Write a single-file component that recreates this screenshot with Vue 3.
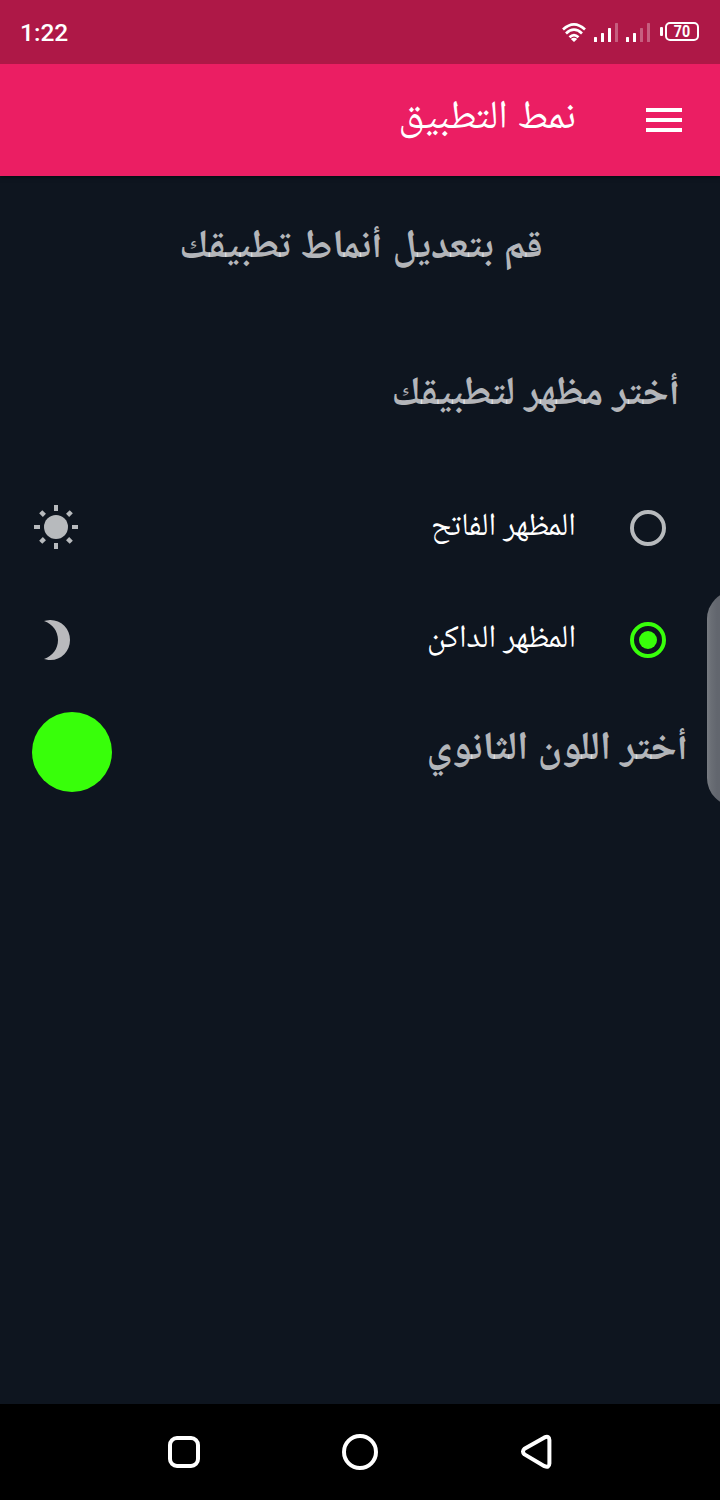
<script setup>
import { ref } from 'vue'

const theme = ref('dark')
const themes = [
  { id: 'light', label: 'المظهر الفاتح' },
  { id: 'dark', label: 'المظهر الداكن' }
]
</script>

<template>
  <div class="screen" dir="rtl">
    <header class="status" dir="ltr">
      <span class="clock">1:22</span>
      <svg class="status-icons" viewBox="0 0 142 24" width="142" height="24">
        <g fill="none" stroke="#fff" stroke-width="2.7">
          <path d="M3 9.4Q14-.8 25 9.4" />
          <path d="M6 13.4Q14 5.9 22 13.4" />
          <path d="M9.5 17.2Q14 13 18.5 17.2" />
        </g>
        <path d="M10.8 19Q14 16.4 17.2 19L14 22Z" fill="#fff" />
        <g fill="#fff">
          <rect x="34" y="17" width="3" height="5" rx=".6" />
          <rect x="41" y="13" width="3" height="9" rx=".6" />
          <rect x="48" y="8" width="3" height="14" rx=".6" />
          <rect x="66" y="17" width="3" height="5" rx=".6" />
          <rect x="73" y="13" width="3" height="9" rx=".6" />
          <rect x="100" y="7" width="3" height="9" rx="1" />
        </g>
        <g fill="#fff" opacity=".3">
          <rect x="55" y="3" width="3" height="19" rx=".6" />
          <rect x="80" y="8" width="3" height="14" rx=".6" />
          <rect x="87" y="3" width="3" height="19" rx=".6" />
        </g>
        <rect x="106" y="3" width="32" height="17" rx="4" fill="none" stroke="#fff" stroke-width="2" />
        <text x="122" y="17.3" text-anchor="middle" textLength="16.4" lengthAdjust="spacingAndGlyphs" class="battery">70</text>
      </svg>
    </header>

    <div class="appbar">
      <svg class="menu" width="36" height="24" viewBox="0 0 36 24">
        <path d="M0 0H36V4H0ZM0 10H36V14H0ZM0 20H36V24H0Z" fill="#fff" />
      </svg>
      <h1 class="title">نمط التطبيق</h1>
    </div>

    <main class="content">
      <h2 class="heading intro">قم بتعديل أنماط تطبيقك</h2>
      <h2 class="heading pick">أختر مظهر لتطبيقك</h2>

      <div v-for="t in themes" :key="t.id" class="option" @click="theme = t.id">
        <svg class="radio" :class="{ on: theme === t.id }" width="36" height="36" viewBox="0 0 36 36">
          <circle cx="18" cy="18" r="16" fill="none" stroke="currentColor" stroke-width="4" />
          <circle v-if="theme === t.id" cx="18" cy="18" r="9" fill="currentColor" />
        </svg>
        <span class="label">{{ t.label }}</span>
        <svg v-if="t.id === 'light'" class="glyph" width="48" height="48" viewBox="0 1 48 48">
          <g fill="#b7babd">
            <circle cx="24" cy="24" r="12" />
            <path d="M22 2h4v6h-4zM22 40h4v6h-4zM2 22h6v4H2zM40 22h6v4h-6z" />
            <path d="M21.8 2.4h4.4v5.2h-4.4zM21.8 40.4h4.4v5.2h-4.4zM2.4 21.8h5.2v4.4H2.4zM40.4 21.8h5.2v4.4h-5.2z" transform="rotate(45 24 24)" />
          </g>
        </svg>
        <svg v-else class="glyph" width="48" height="48" viewBox="0 0 48 48">
          <path d="M12 5C15.5 4 18 4 18.5 4A19.5 20 0 0 1 18.5 44C18 44 15.5 44 12 43C20.5 40 26 33 26 24S20.5 8 12 5Z" fill="#b9babd" />
        </svg>
      </div>

      <div class="accent">
        <h2 class="heading accent-title">أختر اللون الثانوي</h2>
        <i class="swatch"></i>
      </div>
      <i class="edge"></i>
    </main>

    <nav class="navbar" dir="ltr">
      <svg width="36" height="36" viewBox="0 0 36 36">
        <rect x="4" y="4" width="28" height="28" rx="7" />
      </svg>
      <svg width="36" height="36" viewBox="0 0 36 36">
        <circle cx="18" cy="18" r="16" />
      </svg>
      <svg width="36" height="36" viewBox="0 0 36 36">
        <path d="M26.5 3.4L6.5 14.8Q3.4 17.6 6.5 20.4L26.5 32.2Q31.2 34.2 31.4 29.5V6Q31.2 1.2 26.5 3.4Z" />
      </svg>
    </nav>
  </div>
</template>

<style>
html, body { margin: 0; background: #0e151f; }
</style>

<style scoped>
.screen { width: 720px; height: 1500px; display: flex; flex-direction: column; overflow: hidden; background: #0e151f; font-family: "Noto Naskh Arabic UI", "Noto Naskh Arabic", "Noto Sans Arabic", "DejaVu Sans", sans-serif; }
.status { position: relative; z-index: 1; height: 64px; flex: none; box-sizing: border-box; padding: 0 18px 0 20px; background: #ae1847; display: flex; align-items: center; justify-content: space-between; }
.clock { font: 500 24.5px/64px Roboto, sans-serif; color: #fff; padding-top: 1px; }
.battery { font: 700 16px Roboto, sans-serif; fill: #fff; }
.appbar { height: 112px; flex: none; box-sizing: border-box; padding: 0 38px; background: #eb1e63; display: flex; align-items: center; box-shadow: 0 1px 4px rgba(0, 0, 0, .5); }
.menu { flex: none; }
.title, .heading { margin: 0; white-space: nowrap; }
.title { margin-right: 70px; padding-bottom: 4px; font-size: 40px; line-height: 60px; font-weight: 400; word-spacing: .8px; color: #fff; }
.content { flex: 1; position: relative; }
.heading { font-size: 40px; font-weight: 700; color: rgba(255, 255, 255, .7); line-height: 60px; word-spacing: .4px; }
.intro { height: 60px; padding: 42px 0 0 2px; text-align: center; word-spacing: 1px; }
.pick { height: 60px; padding: 87px 40px 0 0; }
.option { height: 112px; display: flex; align-items: center; padding: 0 54px 0 32px; }
.pick + .option { margin-top: 47px; }
.radio { color: #b7babd; flex: none; }
.radio.on { color: #38ff0a; }
.label { margin-right: 54px; padding-bottom: 2px; font-size: 32px; line-height: 48px; color: #fff; white-space: nowrap; }
.glyph { margin-right: auto; flex: none; }
.accent { height: 112px; display: flex; align-items: center; justify-content: space-between; padding: 0 32px; }
.accent-title { padding-bottom: 4px; }
.swatch { width: 80px; height: 80px; border-radius: 50%; background: #38ff0a; }
.edge { position: absolute; top: 415px; left: 707px; width: 60px; height: 215px; border-radius: 28px; background: linear-gradient(90deg, #787c82 0, #6a6e75 4px, #62666e 10px); }
.navbar { height: 96px; flex: none; background: #000; display: flex; align-items: center; justify-content: center; gap: 140px; }
.navbar svg { fill: none; stroke: #fff; stroke-width: 4; stroke-linejoin: round; }
</style>
